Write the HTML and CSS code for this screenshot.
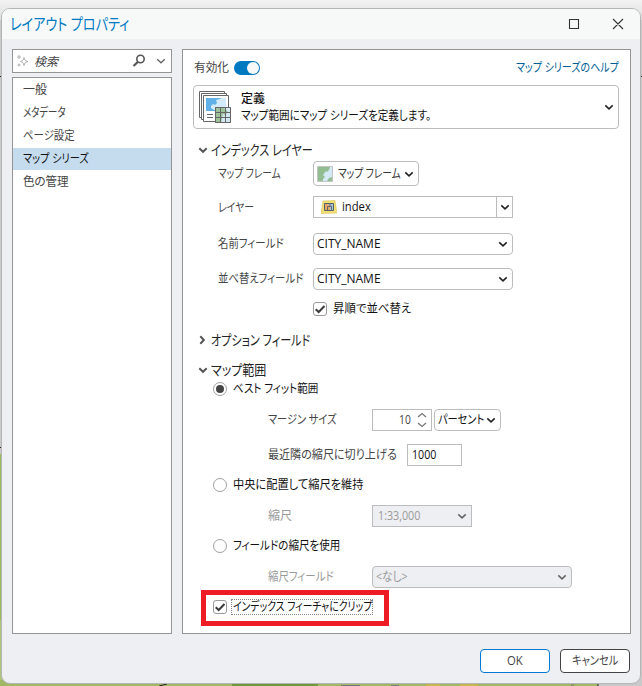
FILE: index.html
```html
<!DOCTYPE html>
<html lang="ja">
<head>
<meta charset="utf-8">
<title>レイアウト プロパティ</title>
<link rel="stylesheet" href="styles.css">
</head>
<body>
<svg width="0" height="0" class="defs">
  <symbol id="chev" viewBox="0 0 10 8"><path d="M1.3 2.300 5 5.800 8.700 2.300" fill="none" stroke="currentColor"/></symbol>
  <symbol id="check" viewBox="0 0 12 12"><path d="M1.700 6.200 4.700 9 10.500 3" fill="none" stroke="#3c3c3c" stroke-width="2"/></symbol>
</svg>
<svg class="backdrop" viewBox="0 0 642 686">
  <defs><linearGradient id="shade" x2="0" y2="1"><stop offset="0" stop-color="#f2f2f2"/><stop offset="1" stop-color="#dedede"/></linearGradient></defs>
  <path fill="#c9c9ca" d="M0 0h642v686H0z"/><path fill="url(#shade)" d="M0 0h642v20H0z"/>
  <path fill="#98bd58" d="M0 454h4v166H0z"/><path fill="#adc57a" d="M0 620h12v66H0z"/>
  <path fill="#a0b764" d="M0 680h598v6H0z"/><path fill="#729938" d="M232 684h86v2h-86z"/>
  <path fill="#c6b64b" d="M426 684h14v2h-14zM460 684h18v2h-18z"/>
  <path stroke="#222" d="M0 76.5h2M640 76.5h2M0 447.5h2M598 683v3M159 686l8-2"/>
  <path stroke="#777" d="M341 685.500h19M391 685.500h8M571 685.500l3-1"/>
</svg>
<main class="dialog">
  <header class="titlebar">
    <h1><span data-w="119">レイアウト プロパティ</span></h1>
    <svg class="win" width="56" height="14" viewBox="0 0 56 14" fill="none" stroke="#333" stroke-width="1.100"><path d="M1.500 2.500h9v9h-9zM45 2l10 10M55 2l-10 10"/></svg>
  </header>
  <div class="body">
    <aside class="side">
      <div class="search">
        <svg width="12" height="12" viewBox="0 0 12 12" fill="none" stroke="#a8a8a8" stroke-width=".9"><path d="M7 2.500 8.200 5.500 11 6.500 8.200 7.500 7 10.500 5.800 7.500 3.500 6.500 5.800 5.500zM2 0v4M0 2h4M2 8.500v3M.5 10h3"/></svg>
        <em><span data-w="24">検索</span></em>
        <svg class="lens" width="14" height="14" viewBox="0 0 14 14" fill="none" stroke="#555"><circle cx="8.500" cy="5" r="3.700" stroke-width="1.600"/><path d="M6 7.800 1.500 12" stroke-width="2.200"/></svg>
        <svg class="thin" width="10" height="8"><use href="#chev"/></svg>
      </div>
      <ul class="nav">
        <li><span data-w="24">一般</span></li>
        <li><span data-w="43">メタデータ</span></li>
        <li><span data-w="52">ページ設定</span></li>
        <li class="on"><span data-w="66">マップ シリーズ</span></li>
        <li><span data-w="46">色の管理</span></li>
      </ul>
    </aside>
    <section class="panel">
      <div class="enable"><span data-w="35">有効化</span><i class="toggle"></i><a><span data-w="103">マップ シリーズのヘルプ</span></a></div>
      <div class="card">
        <svg width="34" height="34" viewBox="0 0 34 34" fill="#fff" stroke="#666"><path d="M1.500 1.500h25v26h-25z"/><path d="M3.500 3.500h25v26h-25z"/><path d="M5.500 5.500h25v26h-25z"/><path d="M8 8h20v13H8z" fill="#61b1e8" stroke="none"/><path d="M13 16l2-2 2 1 2-2-1-3 4-1 1-1h5v12H16l-3-2z" fill="#d2eafb" stroke="none"/><path d="M9 24.500h6M9 27.500h6"/><path d="M17.500 17.500h15v15h-15z" fill="#d2e8f2"/><path d="M18 18h8l4 4-3 3-2-1-2 9h-5z" fill="#9bc397" stroke="none"/><path d="M17.500 17.500h15v15h-15zM22.500 17v16M27.500 17v16M17 22.500h16M17 27.500h16" fill="none"/></svg>
        <p><b><span data-w="24">定義</span></b><br><span data-w="190">マップ範囲にマップ シリーズを定義します。</span></p>
        <svg class="chev" width="10" height="8"><use href="#chev"/></svg>
      </div>
      <h2 class="h-index"><svg width="10" height="8"><use href="#chev"/></svg><span data-w="102">インデックス レイヤー</span></h2>
      <div class="row frame"><label><span data-w="63">マップ フレーム</span></label>
        <div class="box round w106"><svg width="16" height="16" viewBox="0 0 16 16"><path d="M.5.5h15v15H.5z" fill="#d3e9f5" stroke="#c4c4c4"/><path d="M1 1h12l-1 3-2 2-1-1-3 4 2 2-2 2v2H1z" fill="#92bd91"/><path d="M10 15l2-3 3-1v4z" fill="#92bd91"/></svg><span data-w="63">マップ フレーム</span><svg class="chev" width="10" height="8"><use href="#chev"/></svg></div></div>
      <div class="row layer"><label><span data-w="36">レイヤー</span></label>
        <div class="box w200 split"><svg width="16" height="14" viewBox="0 0 16 14"><path d="M2 1 14 .5 16 13 0 13.500z" fill="#f1df74" stroke="#d9c35a" stroke-width=".6"/><path d="M3.500 3.500h9v7h-9z" fill="#a8c3d9" stroke="#53606a"/><path d="M4 4h3l2 2v4H4z" fill="#e5a765"/><path d="M6.500 10V6.500H9V4M9 6.500h1.500V10" fill="none" stroke="#53606a" stroke-width=".9"/></svg><span data-w="29">index</span><div class="drop"><svg width="10" height="8"><use href="#chev"/></svg></div></div></div>
      <div class="row name"><label><span data-w="66">名前フィールド</span></label><div class="box round w200"><span data-w="64">CITY_NAME</span><svg class="chev" width="10" height="8"><use href="#chev"/></svg></div></div>
      <div class="row sort"><label><span data-w="85">並べ替えフィールド</span></label><div class="box round w200"><span data-w="64">CITY_NAME</span><svg class="chev" width="10" height="8"><use href="#chev"/></svg></div></div>
      <div class="row asc"><label></label><i class="cb"><svg width="12" height="12"><use href="#check"/></svg></i><span data-w="78">昇順で並べ替え</span></div>
      <h2 class="h-opt"><svg class="right" width="10" height="8"><use href="#chev"/></svg><span data-w="99">オプション フィールド</span></h2>
      <h2 class="h-range"><svg width="10" height="8"><use href="#chev"/></svg><span data-w="55">マップ範囲</span></h2>
      <div class="row opt best"><i class="radio on"></i><span data-w="85">ベスト フィット範囲</span></div>
      <div class="row sub margin"><label><span data-w="68">マージン サイズ</span></label>
        <div class="box spin"><span data-w="12">10</span><svg width="10" height="16" viewBox="0 0 10 16" fill="none" stroke="#777" stroke-width="1.300"><path d="M1 5 5 1.500 9 5M1 11l4 3.500L9 11"/></svg></div>
        <div class="box round unit"><span data-w="46">パーセント</span><svg class="chev" width="10" height="8"><use href="#chev"/></svg></div></div>
      <div class="row sub near"><label><span data-w="129">最近隣の縮尺に切り上げる</span></label><div class="box num"><span data-w="24">1000</span></div></div>
      <div class="row opt center"><i class="radio"></i><span data-w="130">中央に配置して縮尺を維持</span></div>
      <div class="row sub scale off"><label><span data-w="24">縮尺</span></label><div class="box w100"><span data-w="42">1:33,000</span><svg class="chev" width="10" height="8"><use href="#chev"/></svg></div></div>
      <div class="row opt field"><i class="radio"></i><span data-w="107">フィールドの縮尺を使用</span></div>
      <div class="row sub scale off"><label><span data-w="66">縮尺フィールド</span></label><div class="box round w200"><span data-w="32">&lt;なし&gt;</span><svg class="chev" width="10" height="8"><use href="#chev"/></svg></div></div>
      <div class="clip"><i class="cb"><svg width="12" height="12"><use href="#check"/></svg></i><div class="focus"><span data-w="139">インデックス フィーチャにクリップ</span></div></div>
    </section>
  </div>
  <footer><button class="ok"><span data-w="16">OK</span></button><button><span data-w="46">キャンセル</span></button></footer>
</main>
<script src="fit.js"></script>
</body>
</html>
```
FILE: styles.css
```css
* { box-sizing: border-box; }
body { margin: 0; width: 642px; height: 686px; overflow: hidden; position: relative; color: #444; font: 12px/16px "Open Sans", "Noto Sans CJK JP", sans-serif; font-feature-settings: "palt"; }
svg { display: block; flex: none; }
.defs, .backdrop { position: absolute; top: 0; left: 0; }
.backdrop { width: 642px; height: 686px; }
[data-w] { display: inline-block; white-space: nowrap; transform-origin: 0 50%; }
.dialog { position: relative; margin: 8px 0 0 1px; width: 640px; height: 676px; border: 1px solid #b5b5b6; border-radius: 9px; background: #eeeff2; overflow: hidden; display: flex; flex-direction: column; }
.titlebar { height: 30px; background: #f7f9f9; display: flex; align-items: center; padding: 0 16px 0 8px; flex: none; }
h1 { margin: 0; font-size: 16px; line-height: 24px; font-weight: 400; color: #0079c1; flex: 1; }
.body { display: flex; gap: 10px; margin: 10px 9px 0 10px; height: 585px; flex: none; }
.side { width: 160px; display: flex; flex-direction: column; gap: 4px; }
.search, .nav, .panel { background: #fff; border: 1px solid #959595; }
.search { height: 24px; display: flex; align-items: center; padding: 0 5px 0 4px; }
.search em { flex: 1; margin: 2px 0 0 5px; }
.lens { margin-right: 10px; }
.thin { color: #666; stroke-width: 1.3; }
.nav { margin: 0; padding: 1px 0; flex: 1; list-style: none; }
.nav li { height: 23px; line-height: 22px; padding-left: 10px; }
.nav .on { background: #c5dcef; height: 22px; margin-bottom: 1px; color: #111; }
.panel { width: 449px; padding-left: 10px; }
.enable { display: flex; height: 35px; align-items: center; padding: 0 11px 0 1px; }
.enable a { margin-left: auto; color: #005e95; }
.toggle { width: 26px; height: 14px; border-radius: 7px; background: #0079c1; margin-left: 5px; display: flex; justify-content: flex-end; padding: 1px; }
.toggle::after { content: ""; width: 12px; height: 12px; border-radius: 50%; background: #f7f9f9; }
.card { width: 426px; height: 44px; border: 1px solid #bcbcbf; border-radius: 4px; display: flex; align-items: center; padding: 0 4px 0 4px; color: #111; }
.card p { margin: 0 0 0 9px; line-height: 17px; }
.card b { font-weight: 500; }
.chev { margin-left: auto; color: #222; stroke-width: 1.6; }
h2 { height: 22px; margin: 8px 0 0; padding-left: 5px; display: flex; align-items: center; gap: 3px; font-size: 14px; font-weight: 400; color: #222; }
h2 svg { color: #555; stroke-width: 2; }
.right { transform: rotate(-90deg) translateY(-1px); }
.h-index { margin-top: 10px; }
.h-opt { margin-top: 9px; }
.row { display: flex; align-items: center; height: 22px; padding-left: 25px; }
.row > label { width: 95px; flex: none; }
.frame { height: 25px; }
.layer { margin-top: 10px; }
.layer > label { padding-top: 2px; }
.name { margin-top: 15px; }
.sort { margin-top: 13px; }
.asc { margin-top: 8px; color: #111; }
.asc .cb { margin-right: 6px; }
.box { height: 22px; border: 1px solid #bcbcbf; background: #fff; display: flex; align-items: center; padding: 0 4px 0 3px; color: #111; }
.frame .box { height: 25px; gap: 5px; padding-right: 4px; color: #333; }
.frame .chev { margin-left: -2px; }
.round { border-radius: 4px; }
.w106 { width: 106px; }
.w200 { width: 200px; }
.w100 { width: 100px; }
.w100.box { padding-left: 5px; }
.box.split { padding: 0 0 0 7px; gap: 5px; }
.drop { margin-left: auto; width: 16px; height: 20px; border-left: 1px solid #bcbcbf; display: flex; align-items: center; justify-content: center; color: #222; stroke-width: 1.6; }
.cb { width: 14px; height: 14px; flex: none; border: 1px solid #9a9a9d; border-radius: 3px; background: #fff; }
.row.opt { padding-left: 20px; color: #111; margin-top: 8px; }
.row.best { height: 16px; margin-top: 0; }
.radio { width: 14px; height: 14px; border: 1px solid #a0a0a3; border-radius: 50%; margin-right: 6px; padding: 2px; }
.radio.on::after { content: ""; display: block; width: 8px; height: 8px; border-radius: 50%; background: #444; }
.row.sub { padding-left: 75px; }
.sub > label { width: 104px; }
.margin { margin-top: 12px; }
.near { margin-top: 13px; }
.near > label { width: 139px; }
.spin { width: 60px; justify-content: flex-end; gap: 6px; color: #444; }
.box.unit { width: 67px; margin-left: 2px; padding: 0 4px 0 3px; }
.box.num { width: 55px; padding-left: 4px; }
.scale { margin-top: 9px; }
.off label { color: #999; }
.off .box { background: #eeeff2; color: #999; }
.off .chev { color: #666; }
.clip { width: 188px; height: 36px; margin: 2px 0 0 8px; border: 5px solid #ed1c24; display: flex; align-items: center; padding: 0 0 2px 7px; color: #111; }
.focus { margin-left: 4px; height: 16px; width: 142px; padding-left: 1px; border: 1px dotted #888; line-height: 14px; }
footer { display: flex; justify-content: flex-end; gap: 10px; margin: 15px 10px 0 0; }
button { width: 70px; height: 24px; padding: 0; border: 1px solid #444; border-radius: 4px; background: #fff; color: #444; font: inherit; font-feature-settings: inherit; }
.ok { border-color: #0078d4; }
```
FILE: fit.js
```js
document.querySelectorAll('[data-w]').forEach(function (el) {
  var natural = el.offsetWidth, wanted = Number(el.dataset.w);
  el.style.transform = 'scaleX(' + wanted / natural + ')';
  el.style.marginRight = wanted - natural + 'px';
});
```
